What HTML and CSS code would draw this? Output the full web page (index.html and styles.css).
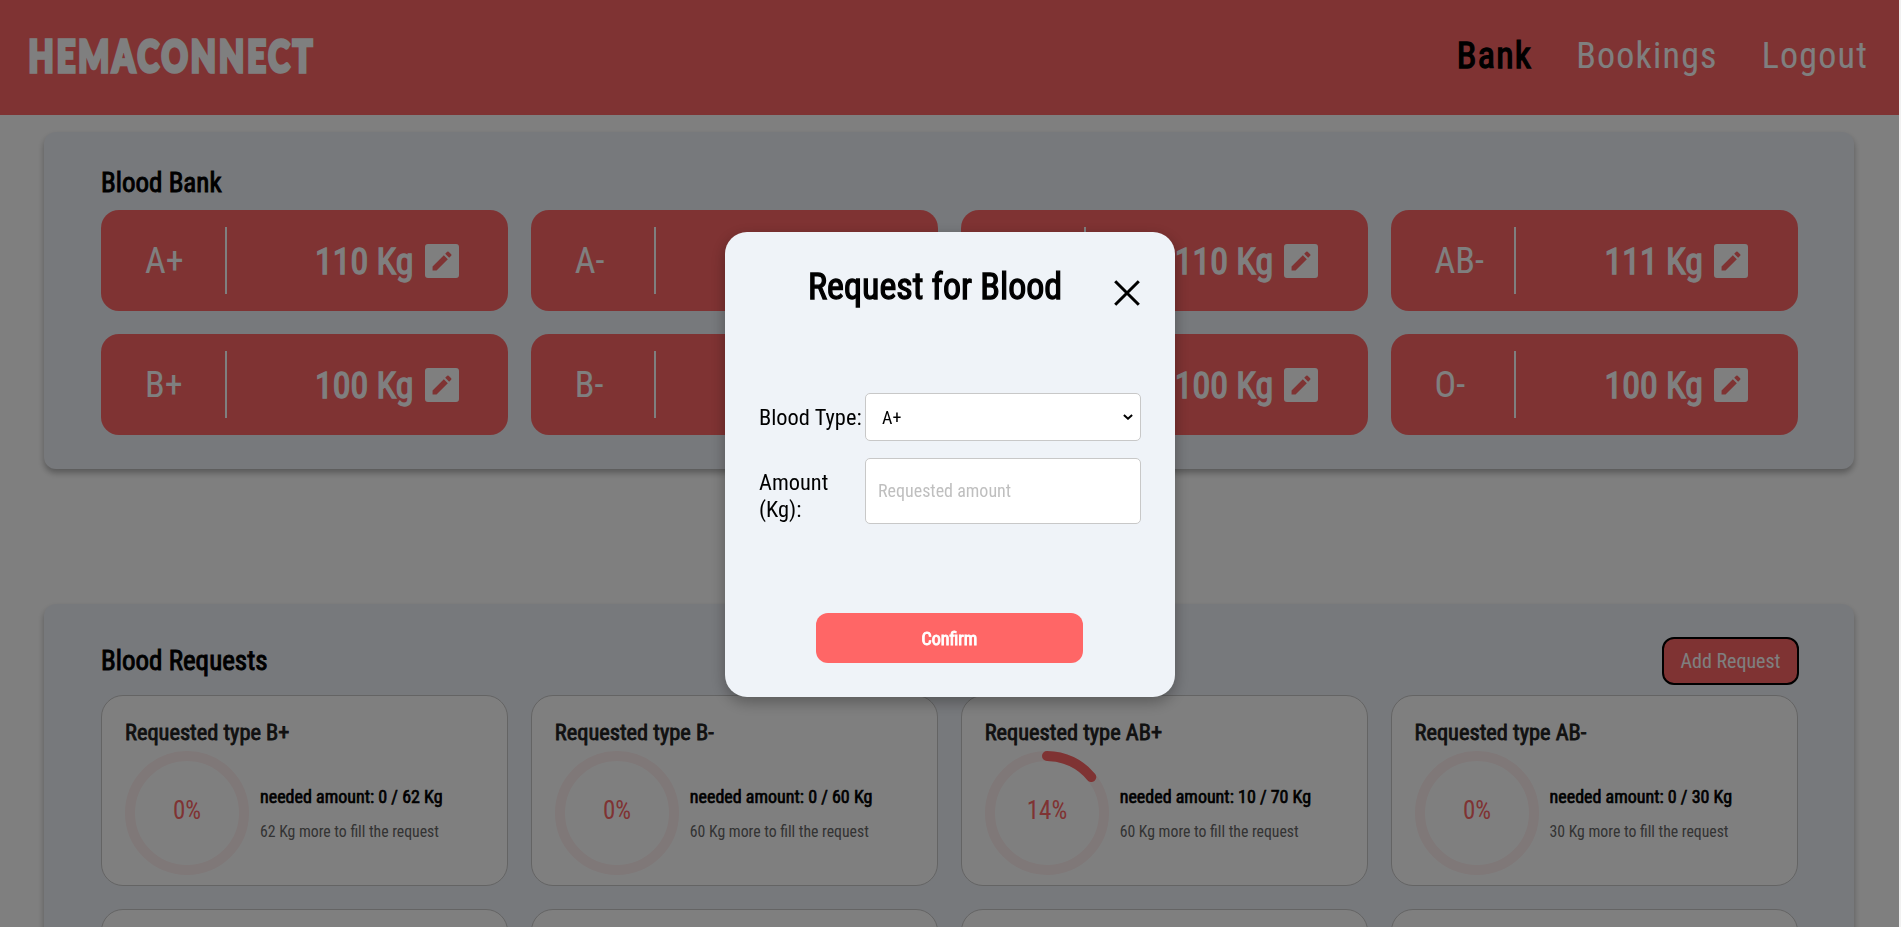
FILE: index.html
```html
<!DOCTYPE html>
<html lang="en">
<head>
<meta charset="utf-8">
<title>HemaConnect</title>
<link rel="stylesheet" href="styles.css">
</head>
<body>
<svg class="defs" width="0" height="0" aria-hidden="true">
  <symbol id="edit" viewBox="3 3 18 18">
    <path fill="currentColor" fill-rule="evenodd" d="M19.4 3H4.6A1.6 1.6 0 0 0 3 4.600v14.800A1.600 1.600 0 0 0 4.600 21h14.800a1.600 1.600 0 0 0 1.600-1.600V4.600A1.600 1.600 0 0 0 19.400 3zM9.100 17H7v-2.100l5.980-5.980 2.100 2.100L9.100 17zm7.750-7.750-1.060 1.060-2.100-2.100 1.060-1.060a.54.54 0 0 1 .77 0l1.330 1.330c.21.21.21.56 0 .77z"/>
  </symbol>
</svg>
<div class="page">
  <header class="header">
    <svg class="logo" width="290" height="64" viewBox="0 0 290 64"><text x="2.500" y="48" textLength="287" lengthAdjust="spacingAndGlyphs">HEMACONNECT</text></svg>
    <nav class="nav"><a class="active">Bank</a><a>Bookings</a><a>Logout</a></nav>
  </header>
  <section class="panel">
    <div class="panel-head"><h2>Blood Bank</h2></div>
    <div class="grid">
      <div class="stock"><span class="type">A+</span><span class="amount">110 Kg</span><svg class="edit"><use href="#edit"/></svg></div>
      <div class="stock"><span class="type">A-</span><span class="amount">100 Kg</span><svg class="edit"><use href="#edit"/></svg></div>
      <div class="stock"><span class="type">AB+</span><span class="amount">110 Kg</span><svg class="edit"><use href="#edit"/></svg></div>
      <div class="stock"><span class="type">AB-</span><span class="amount">111 Kg</span><svg class="edit"><use href="#edit"/></svg></div>
      <div class="stock"><span class="type">B+</span><span class="amount">100 Kg</span><svg class="edit"><use href="#edit"/></svg></div>
      <div class="stock"><span class="type">B-</span><span class="amount">100 Kg</span><svg class="edit"><use href="#edit"/></svg></div>
      <div class="stock"><span class="type">O+</span><span class="amount">100 Kg</span><svg class="edit"><use href="#edit"/></svg></div>
      <div class="stock"><span class="type">O-</span><span class="amount">100 Kg</span><svg class="edit"><use href="#edit"/></svg></div>
    </div>
  </section>
  <section class="panel requests">
    <div class="panel-head"><h2>Blood Requests</h2><button class="add">Add Request</button></div>
    <div class="grid">
      <article class="request"><h3>Requested type B+</h3><div class="body">
        <svg class="ring" viewBox="0 0 124 124"><circle class="track" cx="62" cy="62" r="57"/><text x="62" y="68">0%</text></svg>
        <div class="info"><p class="need">needed amount: 0 / 62 Kg</p><p class="more">62 Kg more to fill the request</p></div></div></article>
      <article class="request"><h3>Requested type B-</h3><div class="body">
        <svg class="ring" viewBox="0 0 124 124"><circle class="track" cx="62" cy="62" r="57"/><text x="62" y="68">0%</text></svg>
        <div class="info"><p class="need">needed amount: 0 / 60 Kg</p><p class="more">60 Kg more to fill the request</p></div></div></article>
      <article class="request"><h3>Requested type AB+</h3><div class="body">
        <svg class="ring" viewBox="0 0 124 124"><circle class="track" cx="62" cy="62" r="57"/><path class="arc" d="M62 5A57 57 0 0 1 106.3 26.1"/><text x="62" y="68">14%</text></svg>
        <div class="info"><p class="need">needed amount: 10 / 70 Kg</p><p class="more">60 Kg more to fill the request</p></div></div></article>
      <article class="request"><h3>Requested type AB-</h3><div class="body">
        <svg class="ring" viewBox="0 0 124 124"><circle class="track" cx="62" cy="62" r="57"/><text x="62" y="68">0%</text></svg>
        <div class="info"><p class="need">needed amount: 0 / 30 Kg</p><p class="more">30 Kg more to fill the request</p></div></div></article>
      <article class="request"></article><article class="request"></article><article class="request"></article><article class="request"></article>
    </div>
  </section>
</div>
<div class="overlay">
  <div class="modal">
    <div class="modal-head"><h1>Request for Blood</h1>
      <svg class="close" viewBox="0 0 26 26"><path d="M1.2 1.2 24.8 24.8M24.8 1.2 1.2 24.8"/></svg></div>
    <div class="fields">
      <label>Blood Type:</label>
      <div class="control select"><span>A+</span><svg width="10" height="6" viewBox="0 0 10 6"><path d="M.9.9 5 4.7 9.1.9"/></svg></div>
      <label>Amount (Kg):</label>
      <input class="control" placeholder="Requested amount">
    </div>
    <button class="confirm">Confirm</button>
  </div>
</div>
</body>
</html>
```
FILE: styles.css
```css
* { box-sizing: border-box; margin: 0; padding: 0; }
body, button, input { font-family: "Roboto Condensed", Roboto, "Liberation Sans", sans-serif; font-stretch: 75%; }
body { height: 927px; overflow: hidden; background: #f1f1f1; }
.defs { position: absolute; }
.page { width: 1899px; height: 927px; overflow: hidden; background: #fff; }
.header { height: 115px; padding: 0 31px 0 26px; background: #ff6666; display: flex; align-items: center; justify-content: space-between; }
.logo { margin-bottom: 4px; overflow: visible; fill: #fff; font: 900 43px Lato, sans-serif; letter-spacing: 4px; stroke: #fff; stroke-width: 3.6px; stroke-linejoin: miter; }
.nav { display: flex; gap: 44px; margin-bottom: 3px; color: #fff; font-size: 36px; letter-spacing: 1.2px; }
.nav .active, h1, h2, h3, .amount, .need, .confirm { font-weight: 400; -webkit-text-stroke: .035em currentColor; }
.nav .active { color: #000; }
.panel { margin: 17px 45px 0 44px; padding: 35px 56px 34px 57px; height: 337px; background: #eff2f8; border-radius: 12px; box-shadow: 0 4px 6px rgba(0, 0, 0, .3); }
.requests { margin-top: 135px; height: 600px; padding-top: 33px; }
.panel-head { height: 43px; display: flex; justify-content: space-between; }
.requests .panel-head { height: 58px; margin-right: -1px; }
h2 { font-size: 27px; line-height: 33px; }
.requests h2 { padding-top: 8px; }
.grid { display: grid; grid-template-columns: repeat(4, 1fr); gap: 23px 22.4px; }
.stock { height: 101px; border-radius: 18px; background: #ff6666; color: #fff; display: flex; align-items: center; font-size: 36px; }
.type { width: 125.5px; height: 67px; line-height: 69px; padding-left: 44px; border-right: 2px solid #fff; }
.amount { width: 198px; padding: 2px 0 0 88.5px; font-size: 36px; white-space: nowrap; }
.edit { width: 34px; height: 34px; }
.add { width: 137px; height: 48px; background: #ff6666; color: #fff; border: 2px solid #000; border-radius: 12px; font-size: 20px; }
.request { height: 191px; border: 1px solid #c8c8c8; border-radius: 22px; background: #fff; padding: 22px 23px; }
h3 { font-size: 22.4px; line-height: 28px; color: #222; }
.body { display: flex; gap: 11px; margin-top: 5px; }
.ring { width: 124px; height: 124px; fill: none; stroke-width: 10; flex: none; }
.track { stroke: #fff0f0; }
.arc { stroke: #ff6666; stroke-linecap: round; }
.ring text { fill: #ff6666; font-size: 25px; text-anchor: middle; }
.info { padding-top: 35px; white-space: nowrap; }
.need { font-size: 18px; line-height: 22px; }
.more { font-size: 15.75px; line-height: 20px; margin-top: 14px; color: #666; }
.overlay { position: fixed; inset: 0 2px 0 0; background: rgba(0, 0, 0, .5); }
.modal { position: absolute; left: 725px; top: 232px; width: 450px; height: 465px; padding: 34px; background: #eff3f8; border-radius: 22px; box-shadow: 0 5px 15px rgba(0, 0, 0, .3); }
.modal-head { display: flex; justify-content: space-between; padding: 0 1.5px 0 49px; }
h1 { font-size: 36px; line-height: 42px; }
.close { width: 26px; height: 26px; margin-top: 14px; stroke: #000; stroke-width: 3; }
.fields { display: grid; grid-template-columns: 106px 276px; grid-template-rows: 48px 66px; gap: 17px 0; margin-top: 85px; align-items: center; }
label { font-size: 22.4px; line-height: 27px; white-space: nowrap; }
label:nth-of-type(2) { white-space: normal; width: 80px; padding-top: 10px; }
.control { width: 100%; height: 100%; background: #fff; border: 1px solid #c8c8c8; border-radius: 5px; padding: 0 12px 2px; font-size: 18px; }
.select { display: flex; align-items: center; justify-content: space-between; padding: 0 7px 0 16px; }
.select path { fill: none; stroke: #000; stroke-width: 2; }
.control::placeholder { color: #bfbfbf; }
.confirm { display: block; width: 267px; height: 50px; margin: 89px 0 0 57px; border: 0; border-radius: 12px; background: #ff6666; color: #fff; font-size: 18px; -webkit-text-stroke-width: .05em; }
```
